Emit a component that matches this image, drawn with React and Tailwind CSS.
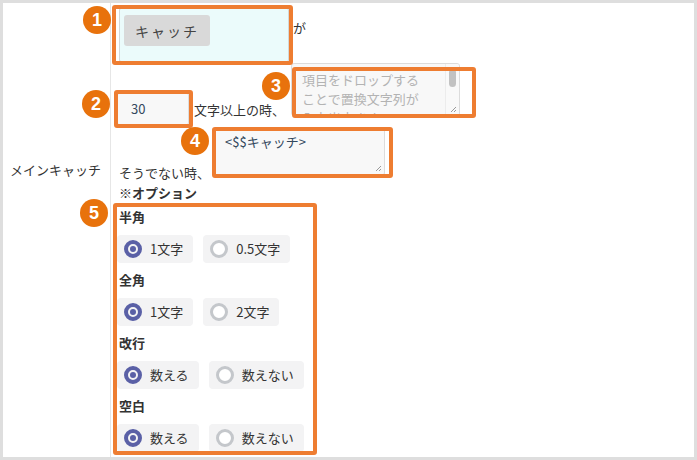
export default function App() {
  const groups = [
    { label: "半角", options: ["1文字", "0.5文字"] },
    { label: "全角", options: ["1文字", "2文字"] },
    { label: "改行", options: ["数える", "数えない"] },
    { label: "空白", options: ["数える", "数えない"] },
  ];

  const boxes = [
    "left-[112px] top-[5px] w-[181px] h-[60px]",
    "left-[114px] top-[90px] w-[79px] h-[38px]",
    "left-[292px] top-[67px] w-[184px] h-[51px]",
    "left-[212px] top-[127px] w-[181px] h-[51px]",
    "left-[113px] top-[203px] w-[204px] h-[252px]",
  ];

  const badges = [
    { n: 1, pos: "left-[83px] top-[6px]" },
    { n: 2, pos: "left-[82px] top-[90px]" },
    { n: 3, pos: "left-[262px] top-[72px]" },
    { n: 4, pos: "left-[181px] top-[127px]" },
    { n: 5, pos: "left-[80px] top-[199px]" },
  ];

  const Resize = () => (
    <svg className="absolute right-[2px] bottom-[2px]" width="7" height="7" viewBox="0 0 7 7">
      <path d="M6 1L1 6M6 4L4 6" stroke="#9a9a9a" strokeWidth="1" />
    </svg>
  );

  return (
    <div className="relative w-[697px] h-[460px] overflow-hidden bg-white text-[#333] text-[13px] leading-[20px] font-['Noto_Sans_CJK_JP','Liberation_Sans',sans-serif]">
      <div className="flex h-full border-[3px] border-[#dedede]">
        {/* label column */}
        <div className="w-[108px] shrink-0 border-r border-[#e6e6e6] pl-[7px] pt-[157px]">
          メインキャッチ
        </div>

        {/* content column */}
        <div className="flex-1 flex flex-col">
          <div className="flex items-start mt-[5px]">
            <div className="ml-[8px] w-[170px] h-[54px] bg-[#ebfbfb] border border-[#d3d8d8] rounded-[2px] pl-[4px] pt-[6px]">
              <div className="w-[86px] h-[31px] rounded-[3px] bg-[#d9d9d9] flex items-center justify-center text-[14px] tracking-[2px] text-[#444]">
                キャッチ
              </div>
            </div>
            <span className="ml-[4px] mt-[10px]">が</span>
          </div>

          <div className="flex items-start mt-[1px]">
            <div className="ml-[6px] mt-[30px] w-[72px] h-[32px] bg-[#f8f8f8] border border-[#dddddd] rounded-[2px] pl-[13px] flex items-center text-[#34495e]">
              30
            </div>
            <span className="ml-[5px] mt-[37px] whitespace-nowrap">文字以上の時、</span>
            <div className="relative ml-[6px] w-[169px] h-[53px] bg-[#f8f8f8] border border-[#dcdcdc] rounded-[3px] overflow-hidden">
              <div className="pl-[10px] pt-[6px] text-[#b3b3b3] leading-[19px] whitespace-nowrap">
                項目をドロップする
                <br />
                ことで置換文字列が
                <br />
                入力出来ます
              </div>
              <div className="absolute right-0 top-0 bottom-0 w-[14px] bg-[#f9f9f9] border-l border-[#ececec]">
                <div className="absolute left-[3px] top-[5px] w-[7px] h-[18px] rounded-full bg-[#c2c2c2]" />
              </div>
              <Resize />
            </div>
          </div>

          <div className="flex items-start mt-[3px]">
            <span className="ml-[8px] mt-[35px] whitespace-nowrap">そうでない時、</span>
            <div className="relative ml-[2px] w-[173px] h-[47px] bg-[#f8f8f8] border border-[#dcdcdc] rounded-[2px] pl-[12px] pt-[3px] text-[#34495e]">
              &lt;$$キャッチ&gt;
              <Resize />
            </div>
          </div>

          <div className="ml-[8px]">
            ※<span className="font-bold">オプション</span>
          </div>

          <div className="ml-[6px] mt-[4px] flex flex-col">
            {groups.map((g, gi) => (
              <div key={gi} className={gi > 0 ? "mt-[7px]" : ""}>
                <div className="pl-[2px] font-bold">{g.label}</div>
                <div className="flex gap-[10px] mt-[8px]">
                  {g.options.map((o, oi) => (
                    <div
                      key={o}
                      className="h-[28px] flex items-center gap-[8px] pl-[7px] pr-[10px] rounded-[4px] bg-[#f3f3f4]"
                    >
                      {oi === 0 ? (
                        <div className="w-[18px] h-[18px] rounded-full border-[4px] border-[#5a60a6] flex items-center justify-center">
                          <div className="w-[6px] h-[6px] rounded-full bg-[#5a60a6]" />
                        </div>
                      ) : (
                        <div className="w-[18px] h-[18px] rounded-full border-[3px] border-[#c4c7cb] bg-white" />
                      )}
                      <span className="whitespace-nowrap">{o}</span>
                    </div>
                  ))}
                </div>
              </div>
            ))}
          </div>
        </div>
      </div>

      {/* annotation overlays */}
      {boxes.map((b, i) => (
        <div key={i} className={`absolute ${b} border-[4px] border-[#ee7d31] rounded-[3px]`} />
      ))}
      {badges.map((b) => (
        <div
          key={b.n}
          className={`absolute ${b.pos} w-[28px] h-[28px] rounded-full bg-[#e8720c] text-white font-bold text-[18px] leading-none flex items-center justify-center font-['Liberation_Sans',sans-serif]`}
        >
          {b.n}
        </div>
      ))}
    </div>
  );
}
